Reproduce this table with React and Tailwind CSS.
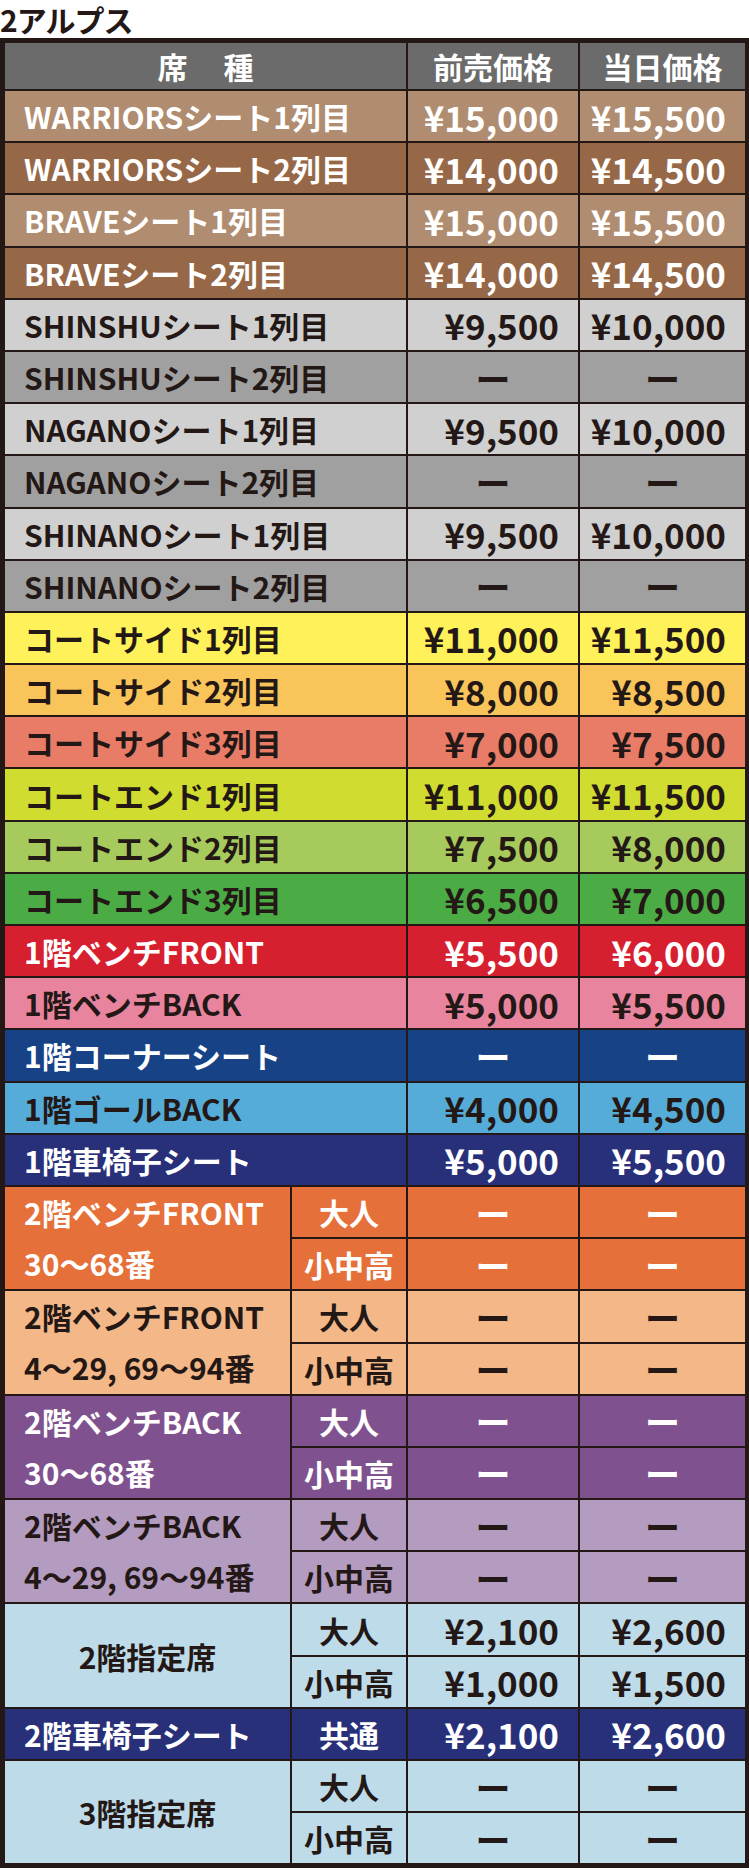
import React from 'react';

const W = 'text-white';
const B = 'text-[#231815]';

// single rows: name spans the first two columns
const singleRows = [
  { name: 'WARRIORSシート1列目', pre: '¥15,000', day: '¥15,500', bg: 'bg-[#b08c70]', fg: W },
  { name: 'WARRIORSシート2列目', pre: '¥14,000', day: '¥14,500', bg: 'bg-[#966848]', fg: W },
  { name: 'BRAVEシート1列目', pre: '¥15,000', day: '¥15,500', bg: 'bg-[#b08c70]', fg: W },
  { name: 'BRAVEシート2列目', pre: '¥14,000', day: '¥14,500', bg: 'bg-[#966848]', fg: W },
  { name: 'SHINSHUシート1列目', pre: '¥9,500', day: '¥10,000', bg: 'bg-[#d0d0d0]', fg: B },
  { name: 'SHINSHUシート2列目', pre: null, day: null, bg: 'bg-[#a0a0a0]', fg: B },
  { name: 'NAGANOシート1列目', pre: '¥9,500', day: '¥10,000', bg: 'bg-[#d0d0d0]', fg: B },
  { name: 'NAGANOシート2列目', pre: null, day: null, bg: 'bg-[#a0a0a0]', fg: B },
  { name: 'SHINANOシート1列目', pre: '¥9,500', day: '¥10,000', bg: 'bg-[#d0d0d0]', fg: B },
  { name: 'SHINANOシート2列目', pre: null, day: null, bg: 'bg-[#a0a0a0]', fg: B },
  { name: 'コートサイド1列目', pre: '¥11,000', day: '¥11,500', bg: 'bg-[#fef159]', fg: B },
  { name: 'コートサイド2列目', pre: '¥8,000', day: '¥8,500', bg: 'bg-[#f9c55a]', fg: B },
  { name: 'コートサイド3列目', pre: '¥7,000', day: '¥7,500', bg: 'bg-[#e87c67]', fg: B },
  { name: 'コートエンド1列目', pre: '¥11,000', day: '¥11,500', bg: 'bg-[#d0dc30]', fg: B },
  { name: 'コートエンド2列目', pre: '¥7,500', day: '¥8,000', bg: 'bg-[#a6cb5c]', fg: B },
  { name: 'コートエンド3列目', pre: '¥6,500', day: '¥7,000', bg: 'bg-[#4bac45]', fg: B },
  { name: '1階ベンチFRONT', pre: '¥5,500', day: '¥6,000', bg: 'bg-[#d7202f]', fg: W },
  { name: '1階ベンチBACK', pre: '¥5,000', day: '¥5,500', bg: 'bg-[#e8849e]', fg: B },
  { name: '1階コーナーシート', pre: null, day: null, bg: 'bg-[#174286]', fg: W },
  { name: '1階ゴールBACK', pre: '¥4,000', day: '¥4,500', bg: 'bg-[#55acd8]', fg: B },
  { name: '1階車椅子シート', pre: '¥5,000', day: '¥5,500', bg: 'bg-[#29307a]', fg: W },
];

// grouped rows: name spans two sub rows (大人 / 小中高)
const groups = [
  { lines: ['2階ベンチFRONT', '30〜68番'], bg: 'bg-[#e6703a]', fg: W, prices: [[null, null], [null, null]] },
  { lines: ['2階ベンチFRONT', '4〜29, 69〜94番'], bg: 'bg-[#f4b888]', fg: B, prices: [[null, null], [null, null]] },
  { lines: ['2階ベンチBACK', '30〜68番'], bg: 'bg-[#7f528f]', fg: W, prices: [[null, null], [null, null]] },
  { lines: ['2階ベンチBACK', '4〜29, 69〜94番'], bg: 'bg-[#b49bc0]', fg: B, prices: [[null, null], [null, null]] },
];

const Price = ({ value, bg, fg }) => (
  <div
    className={`${bg} ${fg} flex items-center text-[35px] leading-none ${
      value ? 'justify-end pr-[19px]' : 'justify-center'
    }`}
  >
    {value || 'ー'}
  </div>
);

const Sub = ({ label, bg, fg }) => (
  <div className={`${bg} ${fg} flex items-center justify-center text-[30px] leading-none`}>{label}</div>
);

const App = () => {
  return (
    <div
      className="w-[749px] bg-white font-bold text-[#231815]"
      style={{ fontFamily: '"Noto Sans CJK JP", "Noto Sans", sans-serif' }}
    >
      {/* タイトル */}
      <h1 className="flex h-[38px] items-center text-[30px] leading-none font-bold tracking-[-1px]">2アルプス</h1>

      <div className="bg-[#231815] p-[5px] pr-[4px] pb-[5px]">
        <div className="grid grid-cols-[285px_114px_170px_165px] grid-rows-[46px_repeat(34,50.2px)] gap-[2px]">
          {/* header */}
          <div className="col-span-2 flex items-center justify-center gap-[36px] bg-[#6b6b6b] text-[30px] leading-none text-white">
            <span>席</span>
            <span>種</span>
          </div>
          <div className="flex items-center justify-center bg-[#6b6b6b] text-[30px] leading-none text-white">前売価格</div>
          <div className="flex items-center justify-center bg-[#6b6b6b] text-[30px] leading-none text-white">当日価格</div>

          {singleRows.map((r) => (
            <React.Fragment key={r.name}>
              <div className={`${r.bg} ${r.fg} col-span-2 flex items-center pl-[19px] text-[30px] leading-none whitespace-nowrap`}>
                {r.name}
              </div>
              <Price value={r.pre} bg={r.bg} fg={r.fg} />
              <Price value={r.day} bg={r.bg} fg={r.fg} />
            </React.Fragment>
          ))}

          {groups.map((g, i) => (
            <React.Fragment key={i}>
              <div className={`${g.bg} ${g.fg} row-span-2 flex flex-col pl-[19px] text-[30px] whitespace-nowrap`}>
                <div className="flex h-[50px] items-center leading-none">{g.lines[0]}</div>
                <div className="flex h-[52px] items-center leading-none">{g.lines[1]}</div>
              </div>
              <Sub label="大人" bg={g.bg} fg={g.fg} />
              <Price value={g.prices[0][0]} bg={g.bg} fg={g.fg} />
              <Price value={g.prices[0][1]} bg={g.bg} fg={g.fg} />
              <Sub label="小中高" bg={g.bg} fg={g.fg} />
              <Price value={g.prices[1][0]} bg={g.bg} fg={g.fg} />
              <Price value={g.prices[1][1]} bg={g.bg} fg={g.fg} />
            </React.Fragment>
          ))}

          {/* 2階指定席 */}
          <div className="row-span-2 flex items-center justify-center bg-[#bedbea] text-[30px] leading-none text-[#231815]">
            2階指定席
          </div>
          <Sub label="大人" bg="bg-[#bedbea]" fg={B} />
          <Price value="¥2,100" bg="bg-[#bedbea]" fg={B} />
          <Price value="¥2,600" bg="bg-[#bedbea]" fg={B} />
          <Sub label="小中高" bg="bg-[#bedbea]" fg={B} />
          <Price value="¥1,000" bg="bg-[#bedbea]" fg={B} />
          <Price value="¥1,500" bg="bg-[#bedbea]" fg={B} />

          {/* 2階車椅子シート */}
          <div className="flex items-center bg-[#29307a] pl-[19px] text-[30px] leading-none text-white whitespace-nowrap">
            2階車椅子シート
          </div>
          <Sub label="共通" bg="bg-[#29307a]" fg={W} />
          <Price value="¥2,100" bg="bg-[#29307a]" fg={W} />
          <Price value="¥2,600" bg="bg-[#29307a]" fg={W} />

          {/* 3階指定席 */}
          <div className="row-span-2 flex items-center justify-center bg-[#bedbea] text-[30px] leading-none text-[#231815]">
            3階指定席
          </div>
          <Sub label="大人" bg="bg-[#bedbea]" fg={B} />
          <Price value={null} bg="bg-[#bedbea]" fg={B} />
          <Price value={null} bg="bg-[#bedbea]" fg={B} />
          <Sub label="小中高" bg="bg-[#bedbea]" fg={B} />
          <Price value={null} bg="bg-[#bedbea]" fg={B} />
          <Price value={null} bg="bg-[#bedbea]" fg={B} />
        </div>
      </div>
    </div>
  );
};

export default App;
